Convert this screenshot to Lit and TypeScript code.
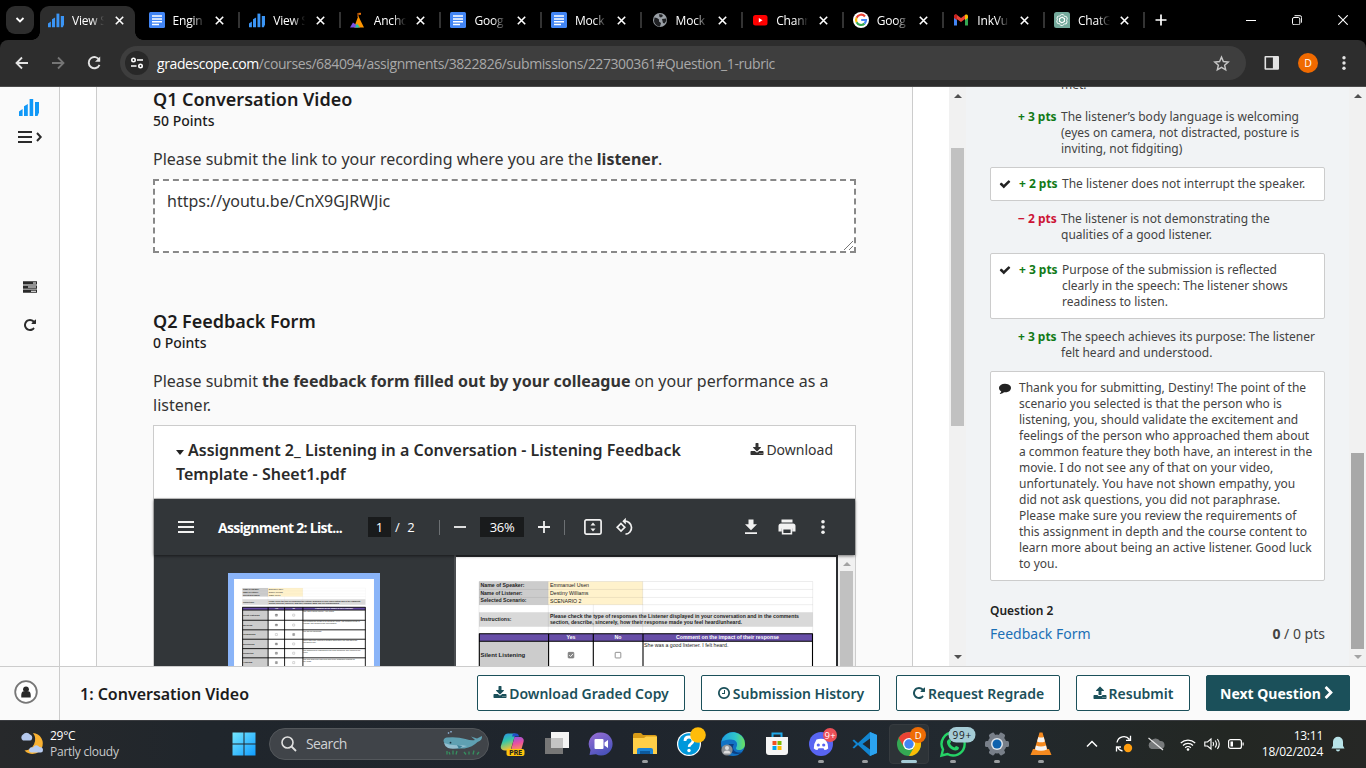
import { LitElement, html, svg, css } from "lit";
import { customElement, property } from "lit/decorators.js";

const FA: Record<string, string> = {
  download: "M1344 1344q0-26-19-45t-45-19-45 19-19 45 19 45 45 19 45-19 19-45zm256 0q0-26-19-45t-45-19-45 19-19 45 19 45 45 19 45-19 19-45zm128-224v320q0 40-28 68t-68 28h-1472q-40 0-68-28t-28-68v-320q0-40 28-68t68-28h465l135 136q58 56 136 56t136-56l136-136h464q40 0 68 28t28 68zm-325-569q17 41-14 70l-448 448q-18 19-45 19t-45-19l-448-448q-31-29-14-70 17-39 59-39h256v-448q0-26 19-45t45-19h256q26 0 45 19t19 45v448h256q42 0 59 39z",
  upload: "M1344 1472q0-26-19-45t-45-19-45 19-19 45 19 45 45 19 45-19 19-45zm256 0q0-26-19-45t-45-19-45 19-19 45 19 45 45 19 45-19 19-45zm128-224v320q0 40-28 68t-68 28h-1472q-40 0-68-28t-28-68v-320q0-40 28-68t68-28h427q21 56 70.5 92t110.5 36h256q61 0 110.5-36t70.5-92h427q40 0 68 28t28 68zm-325-648q-17 40-59 40h-256v448q0 26-19 45t-45 19h-256q-26 0-45-19t-19-45v-448h-256q-42 0-59-40-17-39 14-69l448-448q18-19 45-19t45 19l448 448q31 30 14 69z",
  clock: "M1024 544v448q0 14-9 23t-23 9h-320q-14 0-23-9t-9-23v-64q0-14 9-23t23-9h224v-352q0-14 9-23t23-9h64q14 0 23 9t9 23zm416 352q0-148-73-273t-198-198-273-73-273 73-198 198-73 273 73 273 198 198 273 73 273-73 198-198 73-273zm224 0q0 209-103 385.5t-279.5 279.5-385.5 103-385.5-103-279.5-279.5-103-385.5 103-385.5 279.5-279.5 385.5-103 385.5 103 279.5 279.5 103 385.5z",
  repeat: "M1664 256v448q0 26-19 45t-45 19h-448q-42 0-59-40-17-39 14-69l138-138q-148-137-349-137-104 0-198.5 40.5t-163.5 109.5-109.5 163.5-40.5 198.5 40.5 198.5 109.5 163.5 163.5 109.5 198.5 40.5q119 0 225-52t179-147q7-10 23-12 15 0 25 9l137 138q9 8 9.5 20.5t-7.5 22.5q-109 132-264 204.5t-327 72.5q-156 0-298-61t-245-164-164-245-61-298 61-298 164-245 245-164 298-61q147 0 284.5 55.5t244.5 156.5l130-129q29-31 70-14 39 17 39 59z",
  check: "M1671 566q0 40-28 68l-724 724-136 136q-28 28-68 28t-68-28l-136-136-362-362q-28-28-28-68t28-68l136-136q28-28 68-28t68 28l294 295 656-657q28-28 68-28t68 28l136 136q28 28 28 68z",
  comment: "M1792 896q0 174-120 321.5t-326 233-450 85.5q-70 0-145-8-198 175-460 242-49 14-114 22-17 2-30.5-9t-17.5-29v-1q-3-4-.5-12t2-10 4.5-9.5l6-9 7-8.5 8-9q7-8 31-34.5t34.5-38 31-39.5 32.5-51 27-59 26-76q-157-89-247.5-220t-90.5-281q0-130 71-248.5t191-204.5 286-136.5 348-50.5q244 0 450 85.5t326 233 120 321.5z",
  chevron: "M1363 877l-742 742q-19 19-45 19t-45-19l-166-166q-19-19-19-45t19-45l531-531-531-531q-19-19-19-45t19-45l166-166q19-19 45-19t45 19l742 742q19 19 19 45t-19 45z",
};

const fa = (name: string, size = 14) => html`<svg width=${size} height=${size} viewBox="0 0 1792 1792" fill="currentColor"><path d=${FA[name]} /></svg>`;

const shared = css`
  :host { display: block; box-sizing: border-box; }
  * { box-sizing: border-box; }
  svg { display: block; flex: none; }
`;

const UI = css`"Open Sans", "Noto Sans", sans-serif`;

/* ---------- Browser frame ---------- */

const scopeBars = (color: string) => svg`<g fill=${color}><path d="M0 12.4 3.6 10v7H0z"/><path d="M5 7.2 8.8 5v12H5z"/><path d="M10.6 0h3.6v17h-3.6z"/><path d="M16 3h4v10.5L18.500 17H16z"/></g>`;

const favicons: Record<string, unknown> = {
  scope: html`<svg width="16" height="16" viewBox="0 -2 20 20">${scopeBars("#3b95f5")}</svg>`,
  docs: html`<svg width="16" height="16"><rect width="16" height="16" rx="1.500" fill="#4285f4"/><path d="M3 4h10M3 7h10M3 9.800h10M3 12.500h7" stroke="#fff" stroke-width="1.400"/></svg>`,
  anchor: html`<svg width="16" height="16"><path d="M8 1v4" stroke="#e8710a" stroke-width="1"/><path d="M8.500.8h2.500v2H8.500z" fill="#e8710a"/><path d="M8.300 4 14 15.500H4z" fill="#ff9500"/><path d="M3 10.500 6.500 13 8 15.500H0z" fill="#7b52e8"/><path d="M7 11.500 10 15.500H5z" fill="#26c6a2"/></svg>`,
  globe: html`<svg width="16" height="16"><circle cx="8" cy="8" r="7" fill="#9aa0a6"/><path d="M2.500 5.500 5 6l2 1.500v2l2 1.500-1 3.500c-3 0-5.500-2.500-6-5.500zM7 2.200l3 .3 1 1.500-2 1.500L7.500 5zM10 7l4-.5.5 2-2 3-1.500-.5-.5-2z" fill="#202124"/></svg>`,
  youtube: html`<svg width="16" height="16"><rect x="1" y="3" width="14.500" height="10.500" rx="2.500" fill="#f00"/><path d="m6.800 6 3.700 2.200-3.700 2.200z" fill="#fff"/></svg>`,
  google: html`<svg width="16" height="16"><circle cx="8" cy="8" r="8" fill="#fff"/><g fill="none" stroke-width="2.200"><path d="M12 4.500A5 5 0 0 0 3.600 5.700" stroke="#ea4335"/><path d="M3.600 5.700a5 5 0 0 0 0 4.600" stroke="#fbbc05"/><path d="M3.600 10.300A5 5 0 0 0 11.500 11.600" stroke="#34a853"/><path d="M11.500 11.600A5 5 0 0 0 13 8H8.200" stroke="#4285f4"/></g></svg>`,
  gmail: html`<svg width="16" height="16"><path d="M1 4v9.500h3V6z" fill="#4285f4"/><path d="M15 4v9.500h-3V6z" fill="#34a853"/><path d="M1 4.200C1 2.600 2.800 2 4 3l4 3 4-3v4L8 10 1 5z" fill="#ea4335"/><path d="M1 4.200V6l3 2.200V3C2.800 2 1 2.600 1 4.200z" fill="#c5221f"/><path d="M12 3v5l3-2V4.200C15 2.600 13.200 2 12 3z" fill="#fbbc04"/></svg>`,
  gpt: html`<svg width="16" height="16"><path d="M2.500 0h11A2.500 2.500 0 0 1 16 2.500V16H2.500A2.500 2.500 0 0 1 0 13.500v-11A2.500 2.500 0 0 1 2.500 0z" fill="#74aa9c"/><g fill="none" stroke="#fff" stroke-width=".9">${[0, 60, 120, 180, 240, 300].map(a => svg`<path transform="rotate(${a} 8 8)" d="M8 5.300 10.500 6.700V10M5.700 4.500A2.500 2.500 0 0 1 10.300 3.700"/>`)}</g></svg>`,
};

const TABS = [
  ["scope", "View S"], ["docs", "Engin"], ["scope", "View S"], ["anchor", "Ancho"], ["docs", "Goog"], ["docs", "Mock"],
  ["globe", "Mock"], ["youtube", "Chann"], ["google", "Goog"], ["gmail", "InkVu"], ["gpt", "ChatG"],
];

@customElement("browser-frame")
class BrowserFrame extends LitElement {
  static styles = [shared, css`
    :host { background: #000; color: #fff; font-family: ${UI}; height: 87px; }
    .strip { display: flex; height: 40px; align-items: center; }
    .search { width: 28px; height: 28px; margin: 0 6px; border-radius: 9px; background: #2d2d2d; display: grid; place-items: center; }
    .tab { position: relative; width: 100.6px; flex: none; height: 40px; display: flex; align-items: center; padding-left: 8px; }
    .tab.active::before { content: ""; position: absolute; z-index: 0; left: 0; top: 6px; width: 95px; height: 34px; background: #2d2d2d; border-radius: 9px 9px 0 0; }
    .tab.active::after { content: ""; position: absolute; left: -8px; bottom: 0; width: 111px; height: 8px;
      background: radial-gradient(circle at 0 0, #000 7.5px, #2d2d2d 8px) left / 8px 8px no-repeat, radial-gradient(circle at 100% 0, #000 7.5px, #2d2d2d 8px) right / 8px 8px no-repeat; }
    .tab > * { position: relative; z-index: 1; }
    .title { width: 32px; margin-left: 8px; font-size: 12px; letter-spacing: -0.2px; line-height: 18px; white-space: nowrap; overflow: hidden; padding-top: 1px;
      -webkit-mask-image: linear-gradient(90deg, #000 60%, transparent 100%); mask-image: linear-gradient(90deg, #000 60%, transparent 100%); }
    .x { margin-left: 10.5px; }
    .sep { width: 2px; height: 16px; background: #333; margin-left: 14px; }
    .plus { margin-left: 8px; }
    .win { margin-left: auto; display: flex; gap: 36px; padding-right: 18px; }
    .bar { height: 47px; background: #2d2d2d; border-bottom: 1px solid #4b4b4b; border-radius: 8px 8px 0 0; display: flex; align-items: center; padding: 0 14px 0 14px; }
    .nav { display: flex; gap: 20px; }
    .omni { height: 34px; width: 1126px; margin-left: 18px; border-radius: 17px; background: #3e3e3e; display: flex; align-items: center; padding: 0 16px 0 5px; }
    .site { width: 24px; height: 24px; border-radius: 50%; background: #282828; display: grid; place-items: center; }
    .url { margin-left: 8px; font-size: 14px; letter-spacing: -0.405px; color: #a9a9a9; flex: 1; line-height: 20px; white-space: nowrap; padding-top: 1px; }
    .host { color: #fff; }
    .right { margin-left: auto; display: flex; align-items: center; gap: 18px; }
    .me { width: 20px; height: 20px; border-radius: 50%; background: #f06a00; font-size: 10.5px; display: grid; place-items: center; line-height: 20px; }
  `];

  render() {
    const x = html`<svg class="x" width="9" height="9"><path d="m.8.8 7.400 7.400M8.200.8.800 8.200" stroke="#fff" stroke-width="1.600"/></svg>`;
    return html`
      <div class="strip">
        <div class="search"><svg width="10" height="8"><path d="m1.500 2 3.500 3.500L8.500 2" fill="none" stroke="#fff" stroke-width="1.800"/></svg></div>
        ${TABS.map(([icon, title], i) => html`<div class="tab ${i === 0 ? "active" : ""}">${favicons[icon]}<span class="title">${title}</span>${x}${i ? html`<i class="sep"></i>` : ""}</div>`)}
        <svg class="plus" width="12" height="12"><path d="M6 .5v11M.5 6h11" stroke="#fff" stroke-width="1.700"/></svg>
        <div class="win">
          <svg width="10" height="10"><path d="M0 5.500h10" stroke="#fff"/></svg>
          <svg width="10" height="10"><rect x=".5" y="2.500" width="7.300" height="7.300" rx="1.500" fill="none" stroke="#fff"/><path d="M2.500.7h5.500a1.700 1.700 0 0 1 1.600 1.700v5.300" fill="none" stroke="#fff"/></svg>
          <svg width="10" height="10"><path d="m.3.3 9.400 9.400M9.700.3.300 9.700" stroke="#fff" stroke-width="1.100"/></svg>
        </div>
      </div>
      <div class="bar">
        <div class="nav">
          <svg width="16" height="16"><path d="M14 8H3M8 2.500 2.500 8 8 13.500" fill="none" stroke="#e3e3e3" stroke-width="1.800"/></svg>
          <svg width="16" height="16"><path d="M2 8h11M8 2.500 13.500 8 8 13.500" fill="none" stroke="#757575" stroke-width="1.800"/></svg>
          <svg width="16" height="16"><path d="M13.300 5A5.600 5.600 0 1 0 13.500 9.800" fill="none" stroke="#e3e3e3" stroke-width="1.900"/><path d="M14.200 1.500v5.300H9z" fill="#e3e3e3"/></svg>
        </div>
        <div class="omni">
          <div class="site"><svg width="14" height="12"><g fill="none" stroke="#fff" stroke-width="1.600"><circle cx="3.500" cy="3" r="1.700"/><path d="M7 3h6M1 9h5.500"/><circle cx="10.500" cy="9" r="1.700"/></g></svg></div>
          <div class="url"><span class="host">gradescope.com</span>/courses/684094/assignments/3822826/submissions/227300361#Question_1-rubric</div>
          <svg width="17" height="17" viewBox="0 0 24 24"><path d="m12 3 2.700 6.200 6.800.6-5.100 4.500 1.500 6.600-5.900-3.500-5.900 3.500 1.500-6.600-5.100-4.500 6.800-.6z" fill="none" stroke="#c7c7c7" stroke-width="2"/></svg>
        </div>
        <div class="right">
          <svg width="16" height="16"><path fill-rule="evenodd" d="M1.500 1h12.500q1 0 1 1v11.800q0 1-1 1H1.500q-1 0-1-1V2q0-1 1-1zm.6 1.600v10.600h6.800V2.600z" fill="#e3e3e3"/></svg>
          <div class="me">D</div>
          <svg width="16" height="16" fill="#e3e3e3"><circle cx="8" cy="2.800" r="1.700"/><circle cx="8" cy="8" r="1.700"/><circle cx="8" cy="13.200" r="1.700"/></svg>
        </div>
      </div>`;
  }
}

/* ---------- PDF ---------- */

const ROWS: [string, boolean, string[]][] = [
  ["Silent Listening", true, ["She was a good listener. I felt heard."]],
  ["Mirroring", true, ["She followed the rhythm of my words as I spoke. She showed a sense of", "curiosity and continued the conversation."]],
  ["Paraphrasing", false, ["She did not paraphrase."]],
  ["Questioning", true, ["There was really nothing to question about since she had asked the", "questions early."]],
  ["Supporting", true, ["She supported by responding to the funny questions. She reacted to the", "movie."]],
  ["Analyzing", true, ["She kept analyzing each point and clearly suggested reasons for", "her views."]],
];
const EDGES = [84.300, 112, 138, 163.500, 189, 214, 240];

const t = (x: number, y: number, len: number, s: string, o: { fill?: string; weight?: string } = {}) =>
  svg`<text x=${x} y=${y} textLength=${len} lengthAdjust="spacingAndGlyphs" fill=${o.fill ?? "#222"} font-weight=${o.weight ?? "400"}>${s}</text>`;

const feedbackSheet = (width: number, line: number) => html`
  <svg width=${width} height=${width * 240 / 380} viewBox="0 0 380 240" font-family="Liberation Sans, sans-serif" font-size="5.300">
    <rect width="380" height="240" fill="#fff"/>
    <path d="M23 24.500h69.300v23.200H23zM23 84h69.300v156H23z" fill="#ccc"/>
    <path d="M92.300 24.500h94.400v23.200H92.300z" fill="#fff2cc"/>
    <path d="M23 55.300h333.700v14.400H23z" fill="#d9d9d9"/>
    <path d="M23 24.500h333.700M23 32.400h333.700M23 40.400h333.700M23 47.700h333.700M356.700 24.500v52M137.300 47.700v29M92.300 24.500v52M186.700 24.500v52M23 24.500v52" stroke="#000" stroke-opacity=".1" stroke-width=".7" fill="none"/>
    <path d="M23 76.800h333.700v7.500H23z" fill="#674ea7"/>
    ${t(24.500, 30.200, 44, "Name of Speaker:", { weight: "700" })}
    ${t(24.500, 38.200, 42, "Name of Listener:", { weight: "700" })}
    ${t(24.500, 45.400, 46, "Selected Scenario:", { weight: "700" })}
    ${t(94, 30.200, 39, "Emmanuel Usen")}
    ${t(94, 38.200, 38.500, "Destiny Williams")}
    ${t(94, 45.800, 31.500, "SCENARIO 2")}
    ${t(24.500, 64.300, 31, "Instructions:", { weight: "700" })}
    ${t(94, 61.300, 249, "Please check the type of responses the Listener displayed in your conversation and in the comments", { weight: "700" })}
    ${t(94, 67.300, 192, "section, describe, sincerely, how their response made you feel heard/unheard.", { weight: "700" })}
    ${t(110.500, 82.400, 9, "Yes", { fill: "#fff", weight: "700" })}
    ${t(158.500, 82.400, 7, "No", { fill: "#fff", weight: "700" })}
    ${t(220, 82.400, 103, "Comment on the impact of their response", { fill: "#fff", weight: "700" })}
    ${ROWS.map(([label, yes, notes], i) => {
      const y = (EDGES[i] + EDGES[i + 1]) / 2;
      const box = (x: number, on: boolean) => svg`<rect x=${x - 2.800} y=${y - 2.800} width="5.600" height="5.600" rx=".6" fill=${on ? "#858585" : "#fff"} stroke="#777" stroke-width=".8"/>${on ? svg`<path d="M${x - 1.800} ${y}l1.400 1.400 2.400-2.700" fill="none" stroke="#fff" stroke-width=".9"/>` : ""}`;
      return svg`
        ${t(24.500, y + 2, label.length * 2.800, label, { weight: "700" })}
        ${box(115, yes)}${box(162, !yes)}
        ${notes.map((n, k) => t(188, EDGES[i] + 5.700 + k * 5.700, n.length * 2.220, n))}`;
    })}
    <path d="M23.300 76.500V240M92.600 76.500V240M137.300 76.500V240M187 76.500V240M356.500 76.500V240M23 76.800h333.700${EDGES.slice(0, -1).map(y => `M23 ${y}h333.700`).join("")}" fill="none" stroke="#000" stroke-width=${line} />
  </svg>`;

@customElement("pdf-viewer")
class PdfViewer extends LitElement {
  static styles = [shared, css`
    :host { font-family: ${UI}; color: #fff; background: #323639; height: 180px; }
    .bar { height: 56px; display: flex; align-items: center; padding: 0 23px 0 24px; font-size: 13px; position: relative; z-index: 1; box-shadow: 0 1px 3px rgba(0,0,0,.55); background: #323639; }
    .name { margin-left: 24px; width: 126px; font-size: 14px; letter-spacing: -0.7px; font-weight: 700; white-space: nowrap; line-height: 20px; padding-top: 1px; }
    .box { background: #191b1c; height: 20px; line-height: 20px; text-align: center; }
    .p { width: 23px; margin-left: 24px; }
    .of { margin-left: 4px; width: 44px; word-spacing: 4px; }
    .sep { width: 1px; height: 15px; background: #6c7073; }
    .z { width: 44px; margin: 0 14px; font-size: 13px; letter-spacing: -0.3px; }
    .view { display: flex; height: 124px; overflow: hidden; }
    .side { width: 300px; display: flex; justify-content: center; align-items: flex-start; padding-top: 18px; }
    .thumb { border: 6px solid #8ab4f8; }
    .gutter { width: 2px; background: #4a4d50; }
    .sheet { width: 382px; padding-top: 2px; background: #2a2c2f; overflow: hidden; }
    .scroll { width: 17px; background: #f1f1f1; padding-top: 7px; display: flex; flex-direction: column; align-items: center; }
    .grip { width: 13px; background: #c1c1c1; flex: 1; margin-top: 5px; }
    .less { margin-left: 14px; }
    .fit { margin-left: 19px; }
    .turn { margin-left: 13px; }
    .save { margin-left: auto; }
    .print { margin: 0 18px 0 20px; }
  `];

  render() {
    return html`
      <div class="bar">
        <svg width="16" height="12"><path d="M0 1h16M0 6h16M0 11h16" stroke="#f1f1f1" stroke-width="2"/></svg>
        <span class="name">Assignment 2: List...</span>
        <span class="box p">1</span><span class="of">/ 2</span>
        <i class="sep"></i>
        <svg class="less" width="12" height="12"><path d="M0 6h12" stroke="#f1f1f1" stroke-width="1.800"/></svg>
        <span class="box z">36%</span>
        <svg width="12" height="12"><path d="M0 6h12M6 0v12" stroke="#f1f1f1" stroke-width="1.800"/></svg>
        <i class="sep less"></i>
        <svg class="fit" width="18" height="16"><rect x=".9" y=".9" width="16.200" height="14.200" rx="1.500" fill="none" stroke="#f1f1f1" stroke-width="1.700"/><path d="M9 3.500 11.500 6.500h-5zM9 12.500 11.500 9.500h-5z" fill="#f1f1f1"/></svg>
        <svg class="turn" width="20" height="20"><path d="M6 6.500 9.800 10.300 6 14.100 2.200 10.300z" fill="none" stroke="#f1f1f1" stroke-width="1.700"/><path d="M9.500 4.200a6.500 6.500 0 1 1 1 13" fill="none" stroke="#f1f1f1" stroke-width="1.700"/><path d="M10.800.8v6.700L7.300 4.200z" fill="#f1f1f1"/></svg>
        <svg class="save" width="14" height="16"><path d="M4.500.5h5v4.800H13L7 11.200 1 5.300h3.500zM1 13.200h12v1.800H1z" fill="#f1f1f1"/></svg>
        <svg class="print" width="18" height="16"><path d="M3.500.5h11v3h-11zM3 4.500h12a2.500 2.500 0 0 1 2.500 2.500v5.500h-3.300V9.500H3.800v3H.5V7A2.500 2.500 0 0 1 3 4.500z" fill="#f1f1f1"/><path d="M4.600 9.800h8.800v4.900H4.600z" fill="none" stroke="#f1f1f1" stroke-width="1.600"/></svg>
        <svg width="18" height="16" fill="#f1f1f1"><circle cx="9" cy="2.800" r="1.800"/><circle cx="9" cy="8" r="1.800"/><circle cx="9" cy="13.200" r="1.800"/></svg>
      </div>
      <div class="view">
        <div class="side"><div class="thumb">${feedbackSheet(140, 2.400)}</div></div>
        <i class="gutter"></i>
        <div class="sheet">${feedbackSheet(380, 1.100)}</div>
        <div class="scroll"><svg width="8" height="4"><path d="M4 0 8 4H0z" fill="#a3a3a3"/></svg><i class="grip"></i></div>
      </div>`;
  }
}

/* ---------- Scrollbar ---------- */

@customElement("scroll-rail")
class ScrollRail extends LitElement {
  @property({ type: Number }) start = 0;
  @property({ type: Number }) length = 0;
  @property() grip = "#c1c1c1";
  @property() end = "#505050";
  static styles = [shared, css`
    :host { width: 17px; flex: none; background: #f1f1f1; display: flex; flex-direction: column; align-items: center; padding: 7px 0; }
    .grip { width: 13px; flex: none; }
    .end { margin-top: auto; }
  `];
  render() {
    return html`<svg width="8" height="4"><path d="M4 0 8 4H0z" fill="#505050"/></svg>
      <i class="grip" style="margin-top:${this.start}px;height:${this.length}px;background:${this.grip}"></i>
      <svg class="end" width="8" height="4"><path d="M0 0h8L4 4z" fill=${this.end} /></svg>`;
  }
}

/* ---------- Rubric ---------- */

const RUBRIC: [boolean, string, string][] = [
  [false, "+ 3 pts", "The listener’s body language is welcoming (eyes on camera, not distracted, posture is inviting, not fidgiting)"],
  [true, "+ 2 pts", "The listener does not interrupt the speaker."],
  [false, "− 2 pts", "The listener is not demonstrating the qualities of a good listener."],
  [true, "+ 3 pts", "Purpose of the submission is reflected clearly in the speech: The listener shows readiness to listen."],
  [false, "+ 3 pts", "The speech achieves its purpose: The listener felt heard and understood."],
];
const COMMENT = ["Thank you for submitting, Destiny! The point of the", "scenario you selected is that the person who is", "listening, you, should validate the excitement and", "feelings of the person who approached them about", "a common feature they both have, an interest in the", "movie. I do not see any of that on your video,", "unfortunately. You have not shown empathy, you", "did not ask questions, you did not paraphrase.", "Please make sure you review the requirements of", "this assignment in depth and the course content to", "learn more about being an active listener. Good luck", "to you."];

@customElement("rubric-panel")
class RubricPanel extends LitElement {
  static styles = [shared, css`
    :host { flex: 1; background: #f1f3f5; padding: 0 24px; font-size: 12px; line-height: 16px; color: #434343; overflow: hidden; }
    .list { display: flex; flex-direction: column; gap: 10px; margin-top: -10px; }
    .item { display: flex; padding: 0 9px 0 28px; }
    .cut { padding-left: 71px; margin-bottom: 6px; }
    .pts { width: 43px; flex: none; font-weight: 700; color: #117a17; white-space: nowrap; letter-spacing: -0.03px; }
    .neg { color: #cc1435; }
    .on { background: #fff; border: 1px solid #ccc; border-radius: 2px; padding: 8px; }
    .mark { width: 20px; flex: none; color: #222; padding-top: 2px; }
    .q { margin-top: 22px; font-weight: 600; color: #222; }
    .foot { display: flex; justify-content: space-between; font-size: 14px; line-height: 20px; margin-top: 5px; }
    .link { color: #1b6fb5; }
    .line { white-space: nowrap; }
  `];
  render() {
    return html`
      <div class="list">
        <div class="cut">met.</div>
        ${RUBRIC.map(([on, pts, text]) => html`<div class="item ${on ? "on" : ""}">
          ${on ? html`<span class="mark">${fa("check", 12)}</span>` : ""}
          <span class="pts ${pts.startsWith("−") ? "neg" : ""}">${pts}</span><span>${text}</span></div>`)}
        <div class="item on"><span class="mark">${fa("comment", 12)}</span><div>${COMMENT.map(l => html`<div class="line">${l}</div>`)}</div></div>
      </div>
      <div class="q">Question 2</div>
      <div class="foot"><span class="link">Feedback Form</span><span><b>0</b> / 0 pts</span></div>`;
  }
}

/* ---------- Taskbar ---------- */

const APPS: [string, unknown, boolean][] = [
  ["copilot", svg`<path d="M9 3.500h7.500l-5 17H6c-3 0-5-2-4-5l3-9q1-3 4-3z" fill="url(#cpA)"/><path d="M14 3.500h3.500q2 0 2.500 3h-7z" fill="#1f50c8"/><path d="M15.500 7h5c3 0 5 2 4 5l-2 7q-1 3-5 3h-6z" fill="url(#cpB)"/><rect x="7.500" y="19" width="18" height="7" rx="2" fill="#ffc40c"/><text x="10" y="25" font-size="6.500" font-weight="700" textLength="13" lengthAdjust="spacingAndGlyphs" fill="#222">PRE</text>`, false],
  ["taskview", svg`<rect x="8" y="2" width="18" height="16" fill="#f4f4f4"/><rect x="2" y="8" width="18" height="16" fill="#777"/><path d="M8 8h12v10H8z" fill="#c4c4c4"/>`, false],
  ["chat", svg`<path d="M14 2.500a11.500 11.500 0 1 1-5 21.800L2.500 25l1-5A11.500 11.500 0 0 1 14 2.500z" fill="url(#chG)"/><rect x="7.500" y="9" width="9" height="10" rx="1" fill="#fff"/><path d="m17.500 12.500 3.500-2.500v8l-3.500-2.500z" fill="#fff"/>`, false],
  ["files", svg`<path d="M2 5q0-2 2-2h6l2 2h12q2 0 2 2v5H2z" fill="#d89b16"/><path d="M2 8h11l2-1.500h11V24H2z" fill="#ffcf48"/><path d="M6 24v-4q0-2 2-2h12q2 0 2 2v4z" fill="#1b84d6"/><path d="M9 24v-3h10v3z" fill="#0d5a9e"/>`, true],
  ["help", svg`<circle cx="14" cy="14" r="12" fill="#fff"/><circle cx="14" cy="14" r="10.800" fill="#0098db"/><path d="M10 11q0-4 4-4t4 3.500q0 2-2 3.300t-1.800 3" fill="none" stroke="#fff" stroke-width="2.800"/><circle cx="14" cy="20.500" r="1.700" fill="#fff"/><circle cx="23" cy="5" r="7.800" fill="#ffbc0a"/>`, false],
  ["edge", svg`<circle cx="14" cy="14" r="12" fill="#1172c4"/><path d="M2.200 12A12 12 0 0 1 26 14c0 4-3 6-6 6s-3.500-1.500-2.500-3c2-4-1-7.500-5.500-7.500-5 0-9 1.500-9.800 2.500z" fill="url(#edG)"/><path d="M10 14c-2 5 2 10 8 10 3 0 5-1 6-2-2 1-8 1-9.500-2.500-1-2-.5-4 .5-5.500z" fill="#0b3f83"/><circle cx="8" cy="20" r="5.600" fill="#8b8f94"/><circle cx="8" cy="18" r="2" fill="#ddd"/><path d="M4.500 23.500q0-3 3.500-3t3.500 3" fill="#ddd"/>`, false],
  ["store", svg`<path d="M9.500 8V3.500h9V8" fill="none" stroke="#1ea7e8" stroke-width="2"/><path d="M3 7h22v15q0 3-3 3H6q-3 0-3-3z" fill="#f5f5f5"/><path d="M9.500 11h4v4h-4z" fill="#f25022"/><path d="M14.500 11h4v4h-4z" fill="#7fba00"/><path d="M9.500 16h4v4h-4z" fill="#00a4ef"/><path d="M14.500 16h4v4h-4z" fill="#ffb900"/>`, false],
  ["discord", svg`<circle cx="14" cy="14" r="12" fill="#5865f2"/><path d="M9.500 9.500q4.500-1.600 9 0 3 4.500 2.700 9-2 1.500-3.700 1.500l-1-1.700h-5l-1 1.700q-1.700 0-3.700-1.500-.3-4.500 2.700-9z" fill="#fff"/><circle cx="11.300" cy="15" r="1.600" fill="#5865f2"/><circle cx="16.700" cy="15" r="1.600" fill="#5865f2"/><circle cx="23" cy="5" r="7" fill="#eb4f57"/><text x="17.500" y="8.500" font-size="9.500" textLength="11" fill="#fff">9+</text>`, true],
  ["code", svg`<path d="m19 2 7 3v18l-7 3L7 15l-4 3.500-1.500-1L5 14l-3.500-3.500 1.500-1L7 13zM19 8.500 11.500 14 19 19.500z" fill="#1285d0" fill-rule="evenodd"/><path d="m19 2 7 3v18l-7 3z" fill="#2ba3f0"/>`, true],
  ["chrome", svg`<circle cx="14" cy="14" r="12" fill="#34a853"/><path d="M3.600 8A12 12 0 0 1 24.400 8L14 8.500l-5 8.500z" fill="#ea4335"/><path d="M24.400 8A12 12 0 0 1 14 26l5.200-9L14 8z" fill="#fbbc05"/><circle cx="14" cy="14" r="6" fill="#fff"/><circle cx="14" cy="14" r="4.700" fill="#4285f4"/><circle cx="23" cy="5" r="8" fill="#ee6c05"/><text x="19.800" y="8.700" font-size="9.500" fill="#fff">D</text>`, true],
  ["whatsapp", svg`<path d="M14 2.500A11.500 11.500 0 1 1 8.500 24L2.500 25.500 4 19.500A11.500 11.500 0 0 1 14 2.500z" fill="#202a2c" stroke="#25d366" stroke-width="2.400"/><path d="M10 9c1.500 0 2 2 2 3l-1 1.500c1 2 2.500 3.300 4.500 4l1.500-1.500c1 0 3 1 3 2-1 3-4 3-7 1.500S7.500 14.500 8 11z" fill="#25d366"/><rect x="9.500" y="-3" width="27" height="15.500" rx="7.700" fill="#a5ccd6"/><text x="13.500" y="8.500" font-size="10" textLength="18.500" fill="#1a1a1a">99+</text>`, true],
  ["settings", svg`<g fill="#787f89"><circle cx="14" cy="14" r="9.500"/>${[0, 60, 120, 180, 240, 300].map(a => svg`<rect x="11" y="2" width="6" height="8" rx="1.500" transform="rotate(${a + 30} 14 14)"/>`)}</g><circle cx="14" cy="14" r="6" fill="#dfe5ea"/><circle cx="14" cy="14" r="4.500" fill="#0f62ad"/>`, true],
  ["vlc", svg`<path d="M6 19h16l2.500 6h-21z" fill="#f58a1f"/><path d="M12.500 2.500h3L20.500 20q-6.500 3.500-13 0z" fill="#f58a1f"/><path d="m11.300 7-1.200 4.500q4 1.700 7.800 0L16.700 7q-2.700 1.200-5.400 0zM9 15.500 8 19.500q6 2.700 12 0l-1-4q-5 2.200-10 0z" fill="#f4f4f4"/>`, true],
];

@customElement("task-bar")
class TaskBar extends LitElement {
  static styles = [shared, css`
    :host { height: 48px; display: flex; align-items: center; color: #fff; font-family: ${UI}; font-size: 12px; letter-spacing: -0.25px; line-height: 16px; border-top: 1px solid #3a3c40; padding-bottom: 1px;
      background: linear-gradient(90deg, #27292b 0, #20262c 15%, #1f252d 45%, #22292f 70%, #232723 90%, #262725 100%); }
    svg { overflow: visible; }
    .weather { width: 231px; padding-left: 18px; display: flex; align-items: center; gap: 6px; }
    .dim { color: #c9cbcc; }
    .start { margin-left: 1px; }
    .search { width: 220px; height: 32px; margin-left: 13px; border-radius: 16px; background: #404449; border: 1px solid #53575b; display: flex; align-items: center; padding: 0 3px 0 11px; font-size: 14px; letter-spacing: -0.6px; color: #d0d2d4; gap: 9px; }
    .fish { margin-left: auto; }
    .apps { display: flex; margin-left: 4px; gap: 4px; }
    .app { width: 40px; height: 40px; border-radius: 4px; display: flex; flex-direction: column; align-items: center; padding-top: 6px; }
    .app.current { background: #2d3337; border: 1px solid #363b3f; padding-top: 5px; }
    .dot { width: 6px; height: 3px; border-radius: 2px; background: #9a9da0; margin-top: 2px; }
    .current .dot { width: 16px; background: #a5ccd6; }
    .tray { display: flex; align-items: center; margin-left: auto; padding-right: 21px; }
    .sync { margin-left: 17px; } .cloud { margin-left: 14px; } .wifi { margin-left: 15px; } .vol { margin-left: 8px; } .bat { margin-left: 7px; }
    .clock { text-align: right; width: 74px; margin-left: 5px; margin-right: 8px; }
  `];
  render() {
    return html`
      <div class="weather">
        <svg width="26" height="26"><path d="M15 2a11 11 0 0 1-8.500 17.500A10.500 10.500 0 1 0 15 2z" fill="#f9b233"/><path d="M5 9.500a3.500 3.500 0 0 1 0-6 4.500 4.500 0 0 1 7 0q3 1 2 4.500-.5 1.500-2 1.500z" fill="#b5c9ee"/><path d="M13 21.500q-3-1-1.500-4 1.500-2 3.500-1 3-4 6.500-.5 3.500 0 3.500 3t-3 2.500z" fill="#b9cdf1"/></svg>
        <div><div>29°C</div><div class="dim">Partly cloudy</div></div>
      </div>
      <svg class="start" width="24" height="24"><defs><linearGradient id="w" x2="1" y2="1"><stop stop-color="#74e7fd"/><stop offset="1" stop-color="#109cff"/></linearGradient></defs><path d="M.5.5h11v11H.500zM12.500.5h11v11h-11zM.5 12.500h11v11H.500zM12.500 12.500h11v11h-11z" fill="url(#w)"/></svg>
      <div class="search">
        <svg width="16" height="16"><circle cx="6.500" cy="6.500" r="5.500" fill="none" stroke="#e0e0e0" stroke-width="1.600"/><path d="m10.500 10.500 4.500 4.500" stroke="#e0e0e0" stroke-width="1.800"/></svg><span>Search</span>
        <svg class="fish" width="46" height="28"><path d="M4.500 11q0-3 3-3.500 11-1 19 1.500 6 2 9.500 1l-4-3.500 6 2 5-2.500q.5 4.500-4.500 6-5 5-13 6.500-19 1-21-7.500z" fill="#5fa0b2"/><path d="M5 13q8 3 17 2l6 1q-13 4-19 2-3.500-2-4-5z" fill="#93bfd0"/><path d="M18 15l2 4 3.500-3z" fill="#3d8097"/><circle cx="11.500" cy="12.700" r=".9" fill="#173342"/><path d="M9 2.500l1.500 1.500M12 1v2.500" stroke="#8fb3d8" stroke-width="1.500" stroke-dasharray="1.500 1"/><path d="M8 24.500v-3.500m3 3.500-1-2.500m4 2.500v-4m3 4 1-3.500M27 24.500l-2-2.500m5 2.500v-3m4 3 1-4m3 4 2-2.500" stroke="#358f5f" stroke-width="1.300"/></svg>
      </div>
      <div class="apps">${APPS.map(([name, art, running]) => html`<div class="app ${name === "chrome" ? "current" : ""}">
        <svg width="28" height="28"><defs>
          <linearGradient id="cpA" x2=".3" y2="1"><stop stop-color="#2b8be8"/><stop offset=".5" stop-color="#32c7a9"/><stop offset="1" stop-color="#e9c33a"/></linearGradient>
          <linearGradient id="cpB" x2=".2" y2="1"><stop stop-color="#8a55e6"/><stop offset=".5" stop-color="#e950a0"/><stop offset="1" stop-color="#ff9a4c"/></linearGradient>
          <linearGradient id="chG" x2=".5" y2="1"><stop stop-color="#9a6fd6"/><stop offset="1" stop-color="#4b53bc"/></linearGradient>
          <linearGradient id="edG"><stop stop-color="#1e9de0"/><stop offset=".6" stop-color="#2fc4c9"/><stop offset="1" stop-color="#6be05a"/></linearGradient>
        </defs>${art}</svg>${running ? html`<i class="dot"></i>` : ""}</div>`)}</div>
      <div class="tray">
        <svg width="12" height="8"><path d="m1 6.500 5-5 5 5" fill="none" stroke="#fff" stroke-width="1.500"/></svg>
        <svg class="sync" width="18" height="18"><path d="M2 7.500A7 7 0 0 1 14.500 4.500M15.500.8v4.500H11M7.500 16A7 7 0 0 1 2.500 12M1.500 16.500V12H6" fill="none" stroke="#fff" stroke-width="1.300"/><circle cx="13" cy="13" r="4.200" fill="#ff9e0f"/></svg>
        <svg class="cloud" width="18" height="14"><path d="M4.500 12A4 4 0 0 1 4 4.500 5 5 0 0 1 13 4a4 4 0 0 1 1 8z" fill="#777a7b"/><path d="m1.500 1 14.500 12" stroke="#e8e8e8" stroke-width="1.200"/></svg>
        <svg class="wifi" width="16" height="13"><g fill="none" stroke="#fff" stroke-width="1.200"><path d="M.8 5a10.500 10.500 0 0 1 14.400 0M3 7.500a7 7 0 0 1 10 0M5.200 9.700a4 4 0 0 1 5.600 0"/></g><circle cx="8" cy="11.500" r="1.300" fill="#fff"/></svg>
        <svg class="vol" width="17" height="14"><g fill="none" stroke="#fff" stroke-width="1.100"><path d="M.8 5v4H3.500L7 12V2L3.500 5zM9 5q1.300 2 0 4M11.200 3.500q2.500 3.500 0 7M13.400 2q3.700 5 0 10"/></g></svg>
        <svg class="bat" width="16" height="12"><rect x=".6" y="1.600" width="12.800" height="8.800" rx="2" fill="none" stroke="#fff" stroke-width="1.200"/><path d="M2.500 3.500h2.500v5H2.500zM14.500 4.500h1.200v3h-1.200z" fill="#fff"/></svg>
        <div class="clock"><div>13:11</div><div>18/02/2024</div></div>
        <svg width="14" height="16"><path d="M7 .8a5 5 0 0 1 5 5v4l1.500 2.700H.5L2 9.800v-4a5 5 0 0 1 5-5zM4.800 13.500h4.400q-.5 2-2.200 2t-2.200-2z" fill="#b8e3e8"/></svg>
      </div>`;
  }
}

/* ---------- Page ---------- */

@customElement("app-root")
class AppRoot extends LitElement {
  static styles = [shared, css`
    :host { width: 1366px; height: 768px; overflow: hidden; font-family: "Noto Sans", sans-serif; color: #333; background: #fff; }
    .page { display: flex; height: 579px; }
    .rail { width: 60px; background: #fafafa; border-right: 1px solid #ccc; display: flex; flex-direction: column; align-items: flex-start; padding: 12px 0 0 19px; color: #2a2a2a; }
    .menu { margin: 15px 0 0 -1px; } .tasks { margin: 138px 0 0 4px; } .redo { margin: 25px 0 0 4px; }
    .main { width: 817px; margin-left: 36px; margin-right: 36px; background: #fafafa; border: solid #ccc; border-width: 0 1px; padding: 0 56px; overflow: hidden; }
    .h { font-size: 18px; line-height: 24px; padding-bottom: 2px; font-weight: 600; color: #1c1c1c; letter-spacing: -0.03px; }
    .pt { font-size: 14px; line-height: 16px; font-weight: 500; color: #1c1c1c; }
    .para { font-size: 16px; line-height: 24px; margin: 18px 0 8px; }
    .answer { height: 74px; border: 2px dashed #888; background: #fff; font-size: 16px; line-height: 24px; padding: 8px 0 0 12px; margin-bottom: 56px; width: 703px; display: flex; justify-content: space-between; }
    .grab { align-self: flex-end; }
    .card { width: 703px; border: 1px solid #ccc; background: #fff; }
    .top { display: flex; justify-content: space-between; padding: 12px 22px; border-bottom: 1px solid #ccc; line-height: 24px; }
    .file { font-size: 16px; font-weight: 600; white-space: nowrap; color: #2a2a2a; }
    .caret { display: inline-block; margin-right: 4px; border: 4.6px solid transparent; border-top: 5px solid #222; border-bottom: 0; vertical-align: 1px; }
    .dl { display: flex; gap: 2px; font-size: 14px; align-items: center; height: 24px; }
    .actions { height: 54px; background: #fafafa; border-top: 1px solid #ccc; display: flex; align-items: flex-start; padding-right: 16px; gap: 16px; }
    .who { width: 60px; height: 53px; border-right: 1px solid #ccc; padding: 13px 0 0 14px; }
    .cur { font-size: 16px; line-height: 24px; font-weight: 600; color: #1c1c1c; margin: 15px auto 0 4px; letter-spacing: -0.02px; }
    .btn { height: 36px; margin-top: 8px; border: 1px solid #1b505a; border-radius: 2px; background: #fff; color: #1b505a; font-size: 14px; font-weight: 600; display: flex; align-items: center; justify-content: center; gap: 2px; white-space: nowrap; }
    .solid { background: #1b505a; color: #fff; font-weight: 700; gap: 1px; }
    .w1 { width: 208px; } .w2 { width: 179px; } .w3 { width: 164px; } .w4 { width: 114px; } .w5 { width: 144px; }
  `];
  render() {
    return html`
      <browser-frame></browser-frame>
      <div class="page">
        <nav class="rail">
          <svg width="20" height="17">${scopeBars("#1098f7")}</svg>
          <svg class="menu" width="25" height="12"><path d="M0 1h14M0 6h14M0 11h14" stroke="#2a2a2a" stroke-width="2"/><path d="m19 2 3.700 4L19 10" fill="none" stroke="#2a2a2a" stroke-width="2"/></svg>
          <svg class="tasks" width="14" height="12"><path d="M0 .3h14v3.300H0zM0 4.400h14v3.300H0zM0 8.500h14v3.300H0z" fill="#2a2a2a"/><path d="M10 1.500h3v1h-3zM5 5.600h8v1H5zM8 9.700h5v1H8z" fill="#fff"/></svg>
          <div class="redo">${fa("repeat", 14)}</div>
        </nav>
        <main class="main">
          <div class="h">Q1 Conversation Video</div>
          <div class="pt">50 Points</div>
          <div class="para">Please submit the link to your recording where you are the <b>listener</b>.</div>
          <div class="answer">https://youtu.be/CnX9GJRWJic<svg class="grab" width="11" height="11"><path d="M1 10 10 1M6 10l4-4" stroke="#777"/></svg></div>
          <div class="h">Q2 Feedback Form</div>
          <div class="pt">0 Points</div>
          <div class="para">Please submit <b>the feedback form filled out by your colleague</b> on your performance as a<br>listener.</div>
          <div class="card">
            <div class="top">
              <div class="file"><i class="caret"></i>Assignment 2_ Listening in a Conversation - Listening Feedback<br>Template - Sheet1.pdf</div>
              <div class="dl">${fa("download")}Download</div>
            </div>
            <pdf-viewer></pdf-viewer>
          </div>
        </main>
        <scroll-rail start="50" length="278"></scroll-rail>
        <rubric-panel></rubric-panel>
        <scroll-rail start="355" length="196" grip="#a8a8a8" end="#a3a3a3"></scroll-rail>
      </div>
      <div class="actions">
        <div class="who"><svg width="24" height="24"><circle cx="12" cy="12" r="10.800" fill="#fff" stroke="#777" stroke-width="1.800"/><circle cx="12" cy="9.300" r="2.900" fill="#2a2a2a"/><path d="M7.300 17.500q-.5-6 2.200-6.300 2.500 1.500 5 0 2.700.3 2.200 6.300z" fill="#2a2a2a"/></svg></div>
        <div class="cur">1: Conversation Video</div>
        <div class="btn w1">${fa("download")}Download Graded Copy</div>
        <div class="btn w2">${fa("clock")}Submission History</div>
        <div class="btn w3">${fa("repeat")}Request Regrade</div>
        <div class="btn w4">${fa("upload")}Resubmit</div>
        <div class="btn solid w5">Next Question${fa("chevron")}</div>
      </div>
      <task-bar></task-bar>`;
  }
}
